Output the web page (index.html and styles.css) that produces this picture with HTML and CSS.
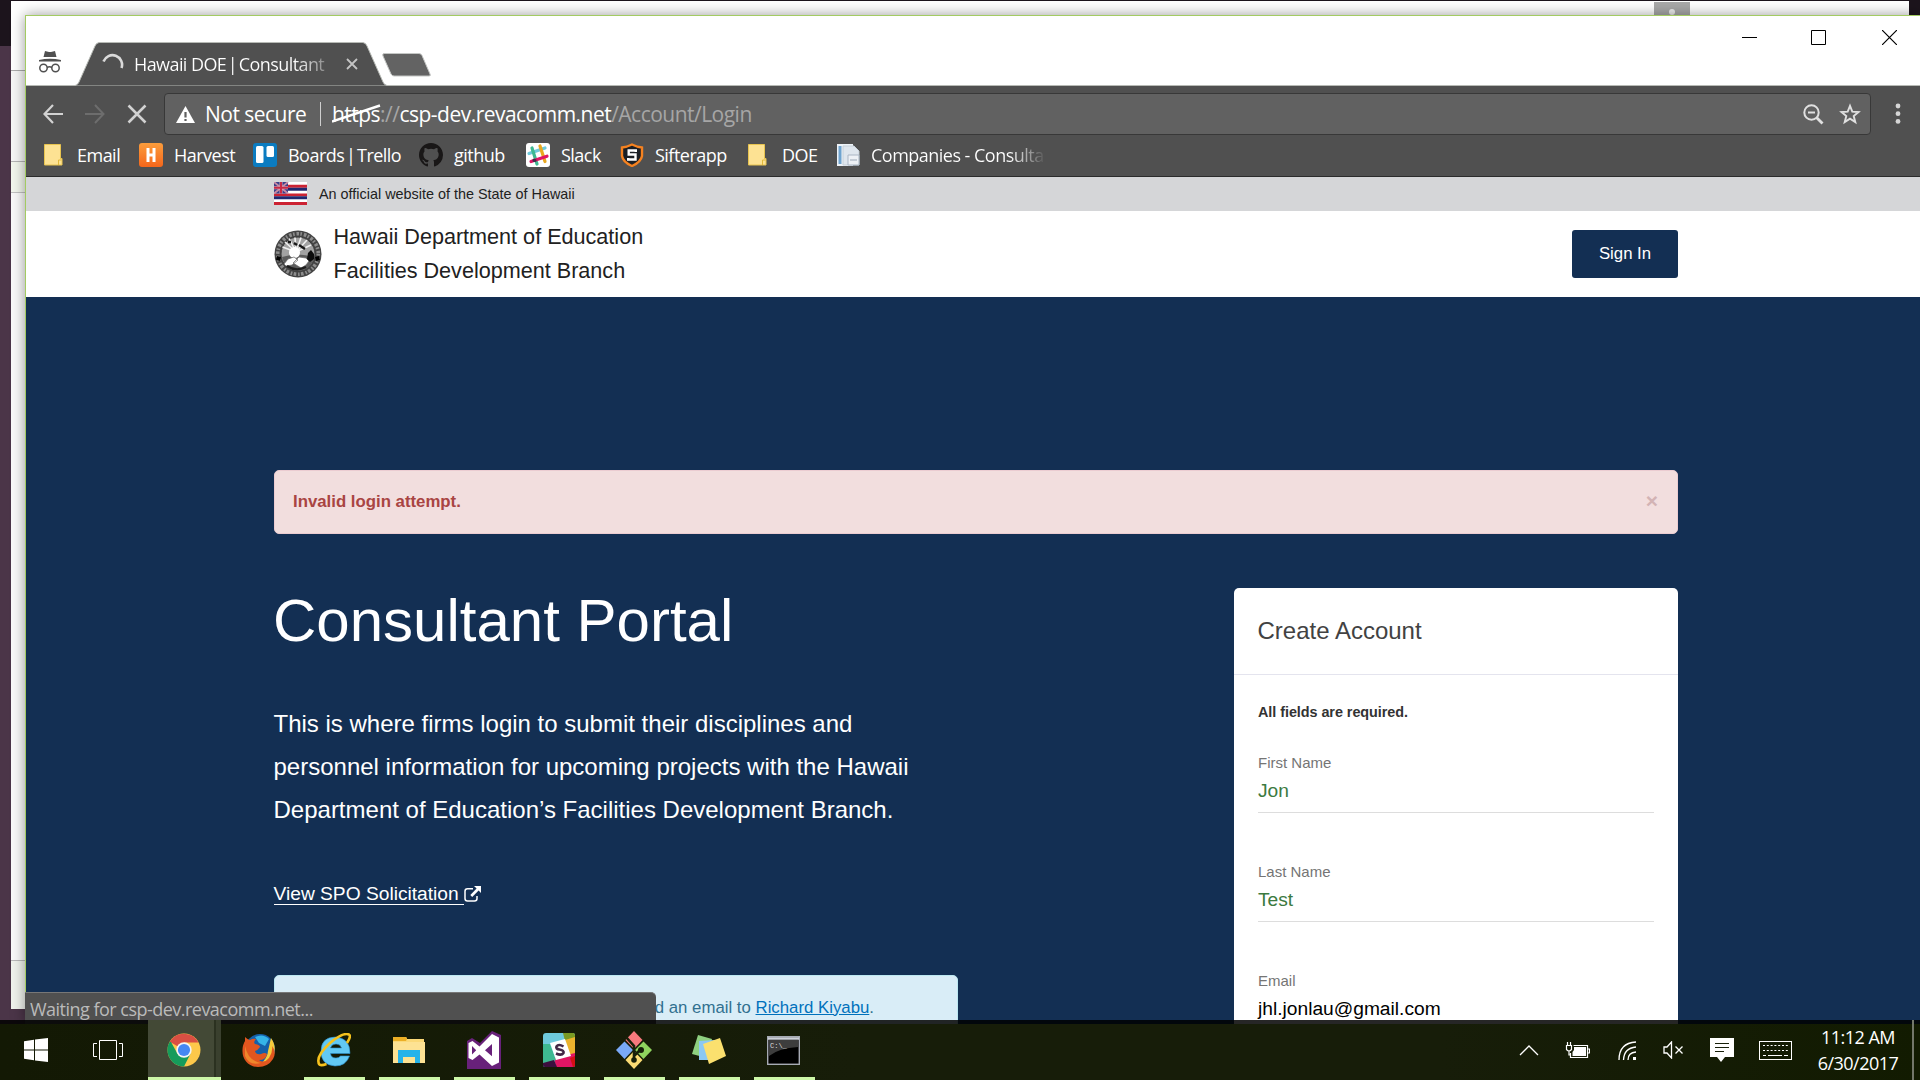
FILE: index.html
```html
<!DOCTYPE html>
<html lang="en">
<head>
<meta charset="utf-8">
<title>Hawaii DOE | Consultant Portal</title>
<link rel="stylesheet" href="styles.css">
</head>
<body>
<div class="desktop">
  <div class="back-window">
    <div class="back-tabs"></div>
    <div class="back-bar"></div>
    <div class="back-notice"></div>
    <div class="back-body"></div>
    <div class="back-foot"></div>
    <svg class="back-user" width="36" height="14" viewBox="0 0 36 14"><rect width="36" height="14" fill="#a9a9a9"/><circle cx="18" cy="10" r="3" fill="#eee"/></svg>
  </div>

  <div class="window">
    <div class="tab-strip">
      <svg class="incognito" width="26" height="24" viewBox="0 0 26 24"><path d="M8 1l4 1h2l4-1 1.500 6h-13zM2 10q11-2.500 22 0v1.500H2z" fill="#505050"/><g fill="none" stroke="#505050" stroke-width="1.500"><circle cx="6.500" cy="18" r="3.700"/><circle cx="18.500" cy="18" r="3.700"/><path d="M10 17.500q2.500-1.500 5 0"/></g></svg>
      <div class="tab">
        <svg class="tab-shape" width="312" height="44" viewBox="0 0 312 44"><path d="M0 43.500C2 43 3 42 4 40L20 4q1-3 4-3.500H288q3 .5 4 3.500L308 40q1 3 4 3.500V44H0z" fill="#505050" stroke="#b7bab5"/></svg>
        <svg class="spinner" width="22" height="22" viewBox="0 0 22 22"><path d="M1.500 8.500A9.500 9.500 0 0 1 19.500 15" fill="none" stroke="#dadada" stroke-width="2.600"/></svg>
        <span class="tab-title">Hawaii DOE <span class="bar">|</span> Consultant</span>
        <svg class="tab-close" width="12" height="12" viewBox="0 0 12 12"><path d="M1 1l10 10M11 1L1 11" stroke="#c4c4c4" stroke-width="1.800"/></svg>
      </div>
      <svg class="new-tab" width="52" height="26" viewBox="0 0 52 26"><path d="M3 1.500h35q2 0 3 2L49 22q1 2-1 2H13q-2 0-3-2L2 4q-1-2 1-2.500z" fill="#636363" stroke="#c4c6c4"/></svg>
      <div class="controls">
        <svg width="15" height="15" viewBox="0 0 15 15"><path d="M0 7.500h15" stroke="#000"/></svg>
        <svg width="15" height="15" viewBox="0 0 15 15"><path d="M.5.5h14v14H.5z" fill="none" stroke="#000"/></svg>
        <svg class="win-close" width="15" height="15" viewBox="0 0 15 15"><path d="M0 0l15 15M15 0L0 15" stroke="#000" stroke-width="1.200"/></svg>
      </div>
    </div>

    <div class="toolbar">
      <svg class="nav" width="20" height="20" viewBox="0 0 20 20"><path d="M10 1L1.500 10l8.500 9M2 10h18" fill="none" stroke="#d2d2d2" stroke-width="2.200"/></svg>
      <svg class="nav fwd" width="20" height="20" viewBox="0 0 20 20"><path d="M10 1l8.500 9L10 19M18 10H0" fill="none" stroke="#6d6d6d" stroke-width="2"/></svg>
      <svg class="nav stop" width="20" height="20" viewBox="0 0 20 20"><path d="M1.500 1.500l17 17M18.500 1.500l-17 17" stroke="#d2d2d2" stroke-width="2.500"/></svg>
      <div class="omnibox">
        <svg width="19" height="17" viewBox="0 0 19 17"><path d="M9.500 0L19 17H0z" fill="#fff"/><path d="M9.500 6v5.500M9.500 13v2" stroke="#5f5f5f" stroke-width="2.200"/></svg>
        <span class="not-secure">Not secure</span>
        <span class="divider"></span>
        <span class="url"><span class="scheme">https<svg class="strike" width="49" height="20" viewBox="0 0 49 20"><path d="M0 17.500L48 1.500" stroke="#fff" stroke-width="2.400"/></svg></span><span class="dim">://</span>csp-dev.revacomm.net<span class="dim">/Account/Login</span></span>
        <svg class="zoom-out" width="21" height="21" viewBox="0 0 21 21"><g fill="none" stroke="#e0e0e0" stroke-width="2"><circle cx="8.500" cy="8.500" r="7.200"/><path d="M5 8.500h7"/><path d="M13.500 13.500l6 6" stroke-width="2.800"/></g></svg>
        <svg class="star" width="22" height="22" viewBox="0 0 22 22"><path d="M11 2.800l2.300 5.800 6.200.4-4.800 4 1.600 6.100L11 15.700l-5.300 3.400L7.300 13 2.500 9l6.200-.4z" fill="none" stroke="#e0e0e0" stroke-width="1.900"/></svg>
      </div>
      <svg class="kebab" width="6" height="22" viewBox="0 0 6 22"><g fill="#d6d6d6"><circle cx="3" cy="3" r="2.400"/><circle cx="3" cy="10.700" r="2.400"/><circle cx="3" cy="18.400" r="2.400"/></g></svg>
    </div>

    <div class="bookmarks">
      <span class="bm bm-email"><svg width="24" height="24" viewBox="0 0 24 24"><path d="M3.500 1.500h16v14h1.500v6.500H3.500z" fill="#fde293" stroke="#e8c44f"/><path d="M17.500 22v-5h3" fill="none" stroke="#e2b93a"/></svg><span class="bm-text">Email</span></span>
      <span class="bm bm-harvest"><svg width="24" height="24" viewBox="0 0 24 24"><defs><linearGradient id="hv" x2="0" y2="1"><stop stop-color="#fb9d3c"/><stop offset="1" stop-color="#f5661b"/></linearGradient></defs><rect width="24" height="24" rx="3" fill="url(#hv)"/><path d="M9 5v14M15 5v14M8 12h8" stroke="#fff" stroke-width="3"/></svg><span class="bm-text">Harvest</span></span>
      <span class="bm bm-trello"><svg width="24" height="24" viewBox="0 0 24 24"><rect width="24" height="24" rx="3" fill="#0b7cc1"/><rect x="3" y="3" width="7.500" height="17" rx="1.500" fill="#fff"/><rect x="13.500" y="3" width="7.500" height="11" rx="1.500" fill="#fff"/></svg><span class="bm-text">Boards <span class="bar">|</span> Trello</span></span>
      <span class="bm bm-github"><svg width="24" height="24" viewBox="0 0 16 16"><path fill="#191717" d="M8 0C3.580 0 0 3.580 0 8c0 3.540 2.290 6.530 5.470 7.590.4.070.55-.17.55-.38 0-.19-.01-.82-.01-1.490-2.010.37-2.530-.49-2.690-.94-.09-.23-.48-.94-.82-1.130-.28-.15-.68-.52-.01-.53.63-.01 1.080.58 1.230.82.72 1.210 1.870.87 2.330.66.07-.52.28-.87.51-1.070-1.780-.2-3.640-.89-3.640-3.950 0-.87.31-1.590.82-2.150-.08-.2-.36-1.020.08-2.120 0 0 .67-.21 2.200.82a7.600 7.600 0 0 1 4 0c1.530-1.040 2.200-.82 2.200-.82.44 1.100.16 1.920.08 2.120.51.56.82 1.270.82 2.150 0 3.070-1.870 3.750-3.650 3.950.29.25.54.73.54 1.480 0 1.070-.01 1.930-.01 2.200 0 .21.15.46.55.38A8 8 0 0 0 16 8c0-4.420-3.580-8-8-8z"/></svg><span class="bm-text">github</span></span>
      <span class="bm bm-slack"><svg width="24" height="24" viewBox="0 0 24 24"><rect width="24" height="24" rx="3" fill="#fff"/><g stroke-width="3.200" stroke-linecap="round" fill="none"><path d="M3 10.500L19 5" stroke="#6ecadc"/><path d="M6 5l5 16" stroke="#3eb991"/><path d="M14 3l5 15.500" stroke="#e9a820"/><path d="M5 18.500l16-5.300" stroke="#e01563"/><path d="M8 17.400l1 .1" stroke="#472a49"/></g></svg><span class="bm-text">Slack</span></span>
      <span class="bm bm-sifter"><svg width="24" height="24" viewBox="0 0 24 24"><path d="M12 1.500q5 2.500 10 3V13q-1 6-10 10Q3 19 2 13V4.500q5-.5 10-3z" fill="#1b1f24" stroke="#f58220" stroke-width="2.400"/><path d="M15.800 9V7.500H8.700v4h6.800v5H8.200V15" fill="none" stroke="#fff" stroke-width="2.400"/></svg><span class="bm-text">Sifterapp</span></span>
      <span class="bm bm-doe"><svg width="24" height="24" viewBox="0 0 24 24"><path d="M3.500 1.500h16v14h1.500v6.500H3.500z" fill="#fde293" stroke="#e8c44f"/><path d="M17.500 22v-5h3" fill="none" stroke="#e2b93a"/></svg><span class="bm-text">DOE</span></span>
      <span class="bm bm-comp"><svg width="24" height="24" viewBox="0 0 24 24"><path d="M1 1h16v22H1z" fill="#eef3f8"/><path d="M2.500 3h3v18h-3z" fill="#6fa3cf"/><path d="M7 3h11l5 5v14H7z" fill="#dfe6ee" stroke="#c6cfd8"/><path d="M12 12h11v10H12z" fill="#eef1f6" stroke="#aab6c4"/><path d="M14 17h7" stroke="#9aa7b6"/></svg><span class="bm-text">Companies - Consulta</span></span>
    </div>

    <div class="page">
      <div class="gov">
        <svg width="33" height="23" viewBox="0 0 33 23"><rect width="33" height="23" fill="#fff"/><path d="M0 4.300h33M0 12.900h33M0 21.500h33" stroke="#cc2333" stroke-width="2.900"/><path d="M0 7.200h33M0 15.800h33" stroke="#20286f" stroke-width="2.900"/><rect width="14" height="11.500" fill="#39408a"/><path d="M0 0l14 11.500M14 0L0 11.500" stroke="#c98ca4" stroke-width="1.800"/><path d="M7 0v11.500M0 5.700h14" stroke="#d9a7b8" stroke-width="3"/><path d="M7 0v11.500M0 5.700h14" stroke="#c92a45" stroke-width="2"/></svg>
        <span>An official website of the State of Hawaii</span>
      </div>
      <div class="site-head">
        <svg width="48" height="48" viewBox="0 0 48 48"><circle cx="24" cy="24" r="23.500" fill="#444"/><circle cx="24" cy="24" r="20.300" fill="none" stroke="#8d8d8d" stroke-width="3.600" stroke-dasharray="1.600 1.900 2.600 1.400"/><circle cx="24" cy="24" r="17" fill="#a2a2a2" stroke="#3a3a3a"/><path d="M22 22L11 12M22 22L15 8.500M22 22L21 7.500M22 22l5-14.500M22 22l11-12M22 22L8.500 17M22 22l15-7" stroke="#f0f0f0" stroke-width="1.600"/><path d="M8 27q15-5 32 0-2 13-16 14Q11 40 8 27z" fill="#5c5c5c"/><circle cx="20.500" cy="22.500" r="5.500" fill="#fff"/><path d="M10 34l4-5 6-2 4 3-6 5-6 1zM19 33l6-6 7 1 3 3-3 4-5 3z" fill="#fff" stroke="#666" stroke-width=".7"/><path d="M34 23l3-3 3 4v5l-4 3-3-3z" fill="#0d0d0d"/><path d="M14 12h3M20 13l3 2M25 15l6 4" stroke="#161616" stroke-width="2.400"/><path d="M13 36q9 6 19 1" stroke="#1d1d1d" stroke-width="2.200" fill="none"/><path d="M2.500 28l4 1M45.500 28l-4 1" stroke="#000" stroke-width="4"/></svg>
        <div class="brand"><div>Hawaii Department of Education</div><div>Facilities Development Branch</div></div>
        <a class="sign-in">Sign In</a>
      </div>
      <div class="hero">
        <div class="alert"><strong>Invalid login attempt.</strong><span class="dismiss">×</span></div>
        <div class="cols">
          <div class="intro">
            <h1>Consultant Portal</h1>
            <p>This is where firms login to submit their disciplines and<br>personnel information for upcoming projects with the Hawaii<br>Department of Education’s Facilities Development Branch.</p>
            <a class="spo"><span>View SPO Solicitation&nbsp;</span><svg width="17" height="16" viewBox="0 0 17 16"><path d="M9 2.800H3.500Q1 2.800 1 5.300V12.500Q1 15 3.500 15H10.500Q13 15 13 12.500V10" fill="none" stroke="#fff" stroke-width="1.500"/><path d="M10 0h7v7l-2.400-2.400L8.200 11 6.300 9l6.300-6.400z" fill="#fff"/></svg></a>
            <div class="info"><span>For technical questions, please send an email to <a>Richard Kiyabu</a>.</span></div>
          </div>
          <div class="card">
            <div class="card-head">Create Account</div>
            <div class="card-body">
              <div class="req">All fields are required.</div>
              <div class="field"><label>First Name</label><div class="value ok">Jon</div></div>
              <div class="field"><label>Last Name</label><div class="value ok">Test</div></div>
              <div class="field"><label>Email</label><div class="value">jhl.jonlau@gmail.com</div></div>
            </div>
          </div>
        </div>
      </div>
    </div>
    <div class="status"><span>Waiting for csp-dev.revacomm.net...</span></div>
  </div>

  <div class="taskbar">
    <div class="apps">
      <span class="sys"><svg width="24" height="24" viewBox="0 0 24 24"><path d="M0 3.300l10-1.500V11.500H0zM11 1.600L24 0v11.500H11zM0 12.500h10v9.700L0 20.700zM11 12.500h13V24L11 22.400z" fill="#fff"/></svg></span>
      <span class="sys tv"><svg width="30" height="20" viewBox="0 0 30 20"><path d="M6.500.5h17v19h-17zM4 3.500H.5v13H4M26 3.500h3.500v13H26" fill="none" stroke="#fff"/></svg></span>
      <span class="app active"><svg width="34" height="34" viewBox="0 0 34 34"><circle cx="17" cy="17" r="16.500" fill="#fdc84a"/><path d="M17 17L2.700 8.700A16.500 16.500 0 0 1 31.500 9.500H17z" fill="#d94f43"/><path d="M2.700 8.700A16.500 16.500 0 0 0 17 33.500L23.500 20.700 17 17 10.500 20.700 4 9z" fill="#169b5b"/><circle cx="17" cy="17" r="7.700" fill="#f4f4f4"/><circle cx="17" cy="17" r="6.100" fill="#4587f3"/></svg></span>
      <span class="app idle"><svg width="34" height="34" viewBox="0 0 34 34"><circle cx="18" cy="16" r="15" fill="#155fa8"/><path d="M13 4q8-4 14 2l-4 7-6-3z" fill="#35b4e8"/><path d="M29 5q7 10 1 20-5 6-12 7 8-8 8-14z" fill="#f5cb3b"/><path d="M3 4q3 3 5 3 3-2 6-1-3 3-1 5 5 1 5 3-2 3-5 4 1 4 6 3 4-2 6 0-1 6-8 6 5 4 10-2 4-6 3-12 5 6 1 13-5 8-15 8C6 34 0 26 .5 17 .7 12 2 10 3 8z" fill="#e1561f"/><path d="M3 13q3 15 16 17-12 3-16-7z" fill="#f0872b"/></svg></span>
      <span class="app"><svg width="34" height="34" viewBox="0 0 34 34"><path d="M33 20.500H13.500q.5 4.500 5.500 4.500 3 0 4.500-2h9q-3.500 10-14.500 10Q4 32 4 18.500 4 4 18.500 4 33 5 33 20.500zM13.500 15h11q-1-4-5.500-4t-5.500 4z" fill="#62c9f4" fill-rule="evenodd" stroke="#2c91cf" stroke-width=".6"/><path d="M30 10q4.500-7 2-8.500Q26-1 13 10 0 22 1.500 29q0 5 8 2" fill="none" stroke="#f5c21d" stroke-width="2.600"/></svg></span>
      <span class="app"><svg width="34" height="30" viewBox="0 0 34 30"><path d="M1 4V3q0-1 1-1h11q2 0 2 2h17v24H1z" fill="#fbd978"/><path d="M1 3q0-1 1-1h11q2 0 2 2l-1 2H1z" fill="#ecaf25"/><path d="M1 7h32v21H1z" fill="#fde293"/><path d="M6 28V15h22v13h-5v-6H11v6z" fill="#26b3e9"/></svg></span>
      <span class="app"><svg width="36" height="38" viewBox="0 0 36 38"><path d="M1 10l5-3 8 5L26 0l9 4v34H1z" fill="#68217a"/><path d="M26 3l7 3.500v25L26 35 13.500 23.500 6.500 29 2.500 27V12l4-2 7 5.500zM26 13l-7 6.300 7 6zM6 15v8.500l4.200-4.200z" fill="#fff" fill-rule="evenodd"/></svg></span>
      <span class="app"><svg width="34" height="36" viewBox="0 0 34 36"><path d="M1 4q0-3 3-3h27q2 0 2 3v29q0 2-2 2H4q-3 0-3-2z" fill="#6ecadc"/><path d="M21 1h10q2 0 2 3v2l-10 3z" fill="#7a9a22"/><path d="M23 8l10-3v19l-5 1z" fill="#ecb32d"/><path d="M12 26l21-5v12q0 2-2 2H14z" fill="#e01563"/><path d="M1 12l7 0 6 16-13 4z" fill="#3eb991"/><path d="M1 31l11-3 3 7H4q-3 0-3-2z" fill="#3c0f3e"/><path d="M8 11l15-4 6 17-15 4z" fill="#fff"/><path d="M21.500 14.500q-5-3-7 0-1 2.500 3 3 5 1 4 3.500-2 3-7.500.5" fill="none" stroke="#432746" stroke-width="2.600"/><path d="M28 26l5-2v9q0 2-2 2z" fill="#d40f14"/></svg></span>
      <span class="app"><svg width="36" height="38" viewBox="0 0 36 38"><path d="M18 0l8.500 9-8.500 9-8.500-9z" fill="#f7797d"/><path d="M27.500 10.500L36 19l-8.500 9-8.500-9z" fill="#8fd45e"/><path d="M8.500 10.500L17 19l-8.500 9L0 19z" fill="#7aa9f7"/><path d="M18 20l8.500 9-8.500 9-8.500-9z" fill="#fbdc74"/><path d="M10 6l8 9v15M18 25l7-7" stroke="#17200a" stroke-width="2.600" fill="none"/><circle cx="18" cy="29" r="2.800" fill="#17200a"/><circle cx="25" cy="19" r="3" fill="#17200a"/></svg></span>
      <span class="app"><svg width="36" height="32" viewBox="0 0 36 32"><path d="M7 1l14 4-5 19L1 20z" fill="#8fd080"/><path d="M8 7l17-1v20H8z" fill="#8cc8f2"/><path d="M12 10l17-6 6 18-17 8z" fill="#fbe06e"/></svg></span>
      <span class="app"><svg width="33" height="29" viewBox="0 0 33 29"><rect x=".7" y=".7" width="31.600" height="27.600" fill="#000" stroke="#a7abb5" stroke-width="1.400"/><path d="M1 2.500h31" stroke="#ccd0d9" stroke-width="2.500"/><path d="M2 4h29v7Q12 12 2 20z" fill="#3d3d3d"/><text x="3" y="12" class="prompt">C:\_</text></svg></span>
    </div>
    <div class="tray">
      <svg class="t-chev" width="20" height="12" viewBox="0 0 20 12"><path d="M1 11l9-9 9 9" fill="none" stroke="#fff" stroke-width="1.300"/></svg>
      <svg class="t-bat" width="25" height="18" viewBox="0 0 25 18"><path d="M8.500 4.500H22.500v12h-17V12M23 8h1.500v4H23M1.500 4.500h5v4q-2.500 3-5 0zM2.500 1v3M5.500 1v3M4 10v4h2" fill="none" stroke="#fff" stroke-width="1.200"/><path d="M9 6h12v9H7.500v-4L9 9z" fill="#fff"/></svg>
      <svg class="t-wifi" width="19" height="19" viewBox="0 0 19 19"><g fill="none" stroke="#fff" stroke-width="1.300"><path d="M1 19Q1 2 18 1M5.500 19Q6 7 18 6M10 19Q10 11.500 18 11"/></g><path d="M15 16h3v3h-3z" fill="#fff"/></svg>
      <svg class="t-vol" width="21" height="18" viewBox="0 0 21 18"><path d="M1 6h3l4.500-5v16L4 12H1zM12.500 5.500l7 7M19.500 5.500l-7 7" fill="none" stroke="#fff" stroke-width="1.300"/></svg>
      <svg class="t-msg" width="24" height="24" viewBox="0 0 24 24"><path d="M0 0h24v19H15l-4 5-4-5H0z" fill="#fff"/><path d="M5 5.500h14M5 9.500h14M5 13.500h9" stroke="#18200a" stroke-width="1.200"/></svg>
      <svg class="t-kb" width="33" height="19" viewBox="0 0 33 19"><rect x=".5" y=".5" width="32" height="18" fill="none" stroke="#fff"/><path d="M4 4.500h25M4 9.500h25" stroke="#fff" stroke-dasharray="2 1.800"/><path d="M4 14.500h3M9 14.500h14M25 14.500h4" stroke="#fff"/></svg>
      <div class="clock"><div>11:12 AM</div><div>6/30/2017</div></div>
      <div class="peek"></div>
    </div>
  </div>
</div>
</body>
</html>
```
FILE: styles.css
```css
* { box-sizing: border-box; }
body { margin: 0; }
svg { display: block; flex: none; }

.desktop {
  position: relative;
  width: 1920px;
  height: 1080px;
  overflow: hidden;
  background: linear-gradient(#1c141c 0 46px, #4b3548 46px);
  font-family: "Liberation Sans", Arial, sans-serif;
}

/* window partly hidden behind the browser */
.back-window {
  position: absolute;
  left: 11px;
  top: 1px;
  width: 1898px;
  height: 1008px;
  display: flex;
  flex-direction: column;
  background: #fafafa;
}
.back-tabs { height: 70px; background: #fff; border-bottom: 1px solid #aaa; }
.back-bar { height: 91px; background: #f6f6f6; border-bottom: 1px solid #b5b5b5; }
.back-notice { height: 31px; background: #f3f7ee; border-bottom: 1px solid #c2c2c2; }
.back-body { flex: 1; }
.back-foot { height: 49px; background: #f0f3ed; border-top: 1px solid #b9b9b9; }
.back-user { position: absolute; left: 1643px; top: 1px; }

.window {
  position: absolute;
  left: 25px;
  top: 15px;
  width: 1895px;
  height: 1009px;
  display: flex;
  flex-direction: column;
  background: #fff;
  border-top: 1px solid #a3cb62;
  border-left: 1px solid #a3cb62;
  box-shadow: 0 0 13px rgba(0, 0, 0, .4);
}

.tab-strip {
  height: 70px;
  display: flex;
  align-items: flex-end;
  padding-left: 11px;
  border-bottom: 1px solid #b7bab5;
  flex: none;
}
.incognito { margin-bottom: 11px; }
.tab {
  position: relative;
  width: 312px;
  height: 44px;
  margin: 0 0 -1px 12px;
  display: flex;
  align-items: center;
  padding-left: 27px;
}
.tab-shape { position: absolute; left: 0; top: 0; }
.spinner, .tab-title, .tab-close { position: relative; }
.tab-title {
  width: 194px;
  margin-left: 10px;
  white-space: nowrap;
  font: 18px/26px "Open Sans", "Noto Sans", sans-serif;
  letter-spacing: -.58px;
  background: linear-gradient(90deg, #fff 160px, #808080 194px);
  -webkit-background-clip: text;
  background-clip: text;
  color: transparent;
}
.bar { margin: 0 -2.500px; }
.tab-close { margin-left: 18px; }
.new-tab { margin: 0 0 7px -6px; }
.controls { display: flex; gap: 54px; margin: 0 23px 40px auto; }
.win-close { margin-left: 2px; }

.toolbar {
  height: 53px;
  display: flex;
  align-items: center;
  padding: 3px 19px 0 17px;
  background: #505050;
  flex: none;
}
.fwd, .stop { margin-left: 22px; }
.omnibox {
  width: 1707px;
  height: 42px;
  margin-left: 17px;
  display: flex;
  align-items: center;
  padding: 0 9px 0 11px;
  background: #616161;
  border: 1px solid #383838;
  border-radius: 4px;
  color: #fff;
  font: 21px/28px "Open Sans", "Noto Sans", sans-serif;
  letter-spacing: -.52px;
  white-space: nowrap;
}
.not-secure { width: 101px; margin-left: 10px; }
.divider { width: 1px; height: 24px; margin-left: 14px; background: #cfcfcf; }
.url { margin-left: 11px; }
.scheme { position: relative; }
.strike { position: absolute; left: 0; top: 4px; }
.dim { color: #a6a6a6; }
.zoom-out { margin-left: auto; }
.star { margin-left: 15px; }
.kebab { margin-left: auto; }

.bookmarks {
  height: 38px;
  display: flex;
  align-items: center;
  padding: 0 0 6px 15px;
  background: #505050;
  border-bottom: 1px solid #2b2b2b;
  color: #fff;
  font: 18px/26px "Open Sans", "Noto Sans", sans-serif;
  letter-spacing: -.52px;
  white-space: nowrap;
  flex: none;
}
.bm { display: flex; align-items: center; gap: 11px; flex: none; }
.bm-email { width: 98px; }
.bm-harvest { width: 114px; }
.bm-trello { width: 166px; }
.bm-github { width: 107px; }
.bm-slack { width: 94px; }
.bm-sifter { width: 125px; }
.bm-doe { width: 91px; }
.bm-email { gap: 12px; }
.bm-doe { gap: 13px; }
.bm-comp .bm-text {
  background: linear-gradient(90deg, #fff 138px, #555 174px);
  -webkit-background-clip: text;
  background-clip: text;
  color: transparent;
}

.page { flex: 1; min-height: 0; overflow: hidden; background: #132f53; }
.gov {
  height: 34px;
  display: flex;
  align-items: center;
  gap: 12px;
  padding: 0 0 1px 248px;
  background: #d5d6d8;
  color: #212121;
  font-size: 14.4px;
}
.site-head {
  height: 86px;
  display: flex;
  align-items: center;
  padding: 0 242px 0 248px;
  background: #fff;
  color: #212121;
}
.brand { margin-left: 11.500px; font-size: 21.6px; line-height: 34px; }
.sign-in {
  width: 106px;
  margin-left: auto;
  border-radius: 3px;
  background: #132f53;
  color: #fff;
  font-size: 16.8px;
  line-height: 48px;
  text-align: center;
}

.hero { padding: 173px 242px 0 248px; color: #fff; }
.alert {
  height: 64px;
  display: flex;
  justify-content: space-between;
  padding: 20px 19px 0 18px;
  background: #f2dede;
  border: 1px solid #ebccd1;
  border-radius: 5px;
  color: #a94442;
  font-size: 16.8px;
  line-height: 22px;
}
.dismiss { color: #d3b3b4; font-size: 21px; font-weight: bold; line-height: 20px; }
.cols { display: flex; justify-content: space-between; margin-top: 54px; }
.intro { width: 684px; }
h1 { margin: 0 0 0 -1px; font-size: 60px; line-height: 66px; font-weight: 400; }
.intro p { margin: 48px 0 0 -.5px; font-size: 24px; line-height: 43.200px; white-space: nowrap; }
.spo { display: flex; align-items: center; margin: 52px 0 0 -.5px; font-size: 19.2px; line-height: 24px; }
.spo span { border-bottom: 1px solid #fff; line-height: 20px; }
.info {
  height: 90px;
  margin-top: 70px;
  padding: 21px 83px 0 18px;
  border: 1px solid #bce8f1;
  border-radius: 5px;
  background: #d9edf7;
  color: #31708f;
  font-size: 16.8px;
  line-height: 22px;
  text-align: right;
}
.info a { color: #0071bc; text-decoration: underline; }

.card { width: 444px; height: 600px; border-radius: 5px; background: #fff; }
.card-head {
  height: 87px;
  padding: 0 24px 0 23.500px;
  border-bottom: 1px solid #e4e4ee;
  color: #424242;
  font-size: 24px;
  line-height: 86px;
}
.card-body { padding: 27px 24px 0; }
.req { color: #333; font-size: 14.4px; font-weight: bold; line-height: 20px; letter-spacing: -.05px; }
.field { height: 109px; color: #212121; }
.req + .field { margin-top: 29px; }
.field label { display: block; color: #757575; font-size: 15px; line-height: 22px; padding-top: 1px; }
.value { height: 39px; border-bottom: 1px solid #ddd; color: #000; font-size: 19.2px; line-height: 33px; }
.value.ok { color: #3c7a3f; }

.status {
  position: absolute;
  left: -1px;
  bottom: 0;
  width: 631px;
  height: 32px;
  padding: 3px 0 0 5px;
  border-top: 1px solid #777;
  border-radius: 0 5px 0 0;
  background: #505050;
  color: #bababa;
  font: 18px/26px "Open Sans", "Noto Sans", sans-serif;
  letter-spacing: -.52px;
}

.taskbar {
  position: absolute;
  left: 0;
  bottom: 0;
  width: 1920px;
  height: 60px;
  display: flex;
  justify-content: space-between;
  border-top: 4px solid rgba(0, 0, 0, .85);
  background: linear-gradient(90deg, #131904, #171d09 45%, #171d09 75%, #121b01) padding-box;
}
.apps { display: flex; gap: 14px; margin-top: -4px; }
.sys { width: 72px; margin-right: -14px; display: flex; align-items: center; justify-content: center; }
.tv { width: 72px; margin-right: -10px; }
.app { width: 61px; display: flex; align-items: center; justify-content: center; padding-right: 2px; border-top: 3px solid transparent; border-bottom: 3px solid #cdf7a8; }
.idle { border-bottom-color: transparent; }
.active {
  width: 73px;
  margin-right: -6px;
  border-top: 0;
  padding-top: 3px;
  background: linear-gradient(90deg, #434936 66px, #2b3120 66px 68px, #3a402e 68px);
}
.prompt { fill: #ddd; font: 7px "Liberation Mono", monospace; }

.tray { display: flex; align-items: center; padding-bottom: 4px; }
.t-bat { margin-left: 26px; }
.t-wifi { margin-left: 28px; }
.t-vol { margin-left: 26px; }
.t-msg { margin-left: 26px; }
.t-kb { margin-left: 25px; }
.clock {
  width: 84px;
  margin-left: 24px;
  color: #fff;
  font: 18px/26px "Open Sans", "Noto Sans", sans-serif;
  letter-spacing: -.52px;
  text-align: center;
  white-space: nowrap;
}
.peek { width: 8px; height: 60px; margin: -4px 0 -4px 12px; border-left: 2px solid #73776a; }
```
